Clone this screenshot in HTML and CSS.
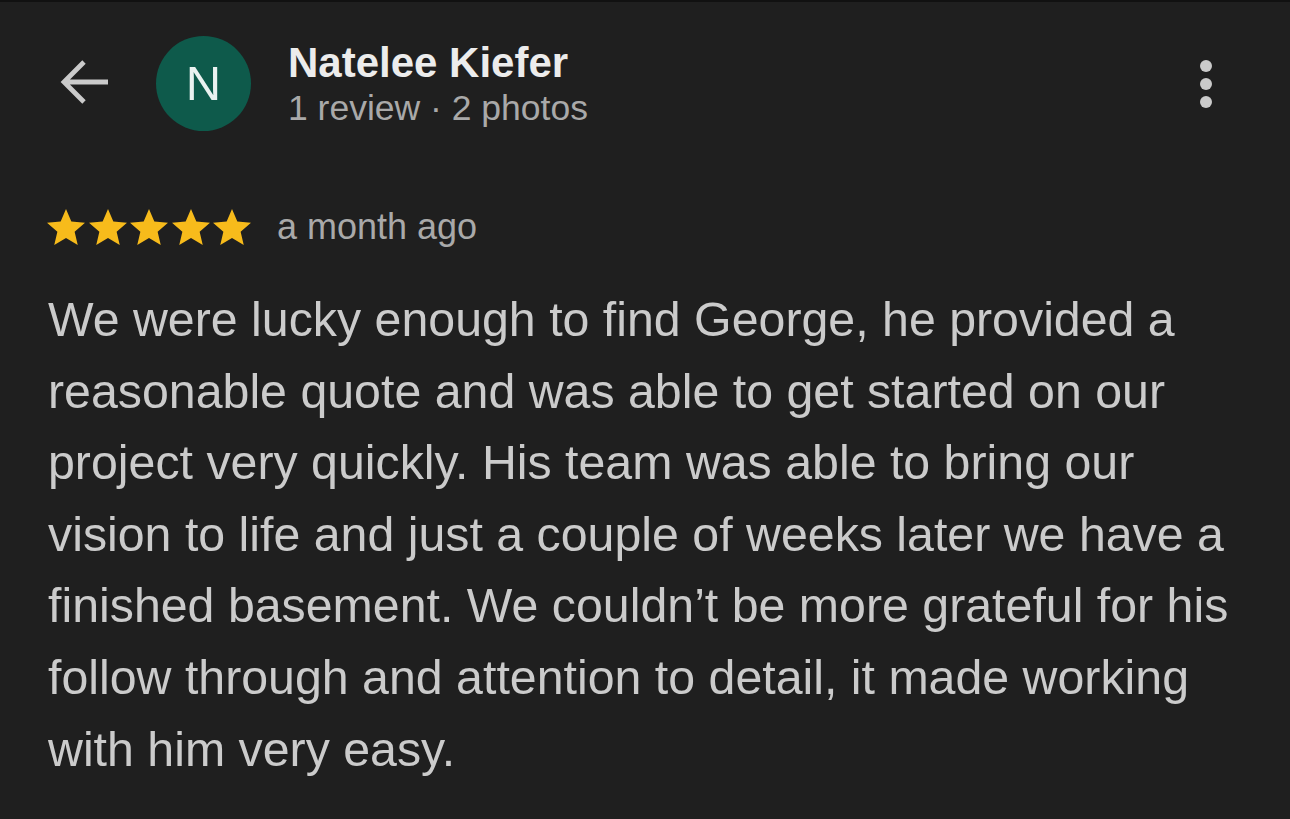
FILE: index.html
```html
<!DOCTYPE html>
<html lang="en">
<head>
<meta charset="utf-8">
<title>Review</title>
<link rel="stylesheet" href="styles.css">
</head>
<body>
<div class="screen">
  <header class="header">
    <button class="back" aria-label="Back">
      <svg width="52" height="52" viewBox="0 0 52 52"><path d="M50 24H8M26 4 6 24l20 20" fill="none" stroke="#cacaca" stroke-width="4.8"/></svg>
    </button>
    <div class="avatar">N</div>
    <div class="who">
      <div class="name">Natelee Kiefer</div>
      <div class="meta">1 review · 2 photos</div>
    </div>
    <div class="more" aria-label="More">
      <span class="dot"></span><span class="dot"></span><span class="dot"></span>
    </div>
  </header>
  <div class="rating">
    <div class="stars">
      <svg class="star" viewBox="2 1.5 20 20"><path d="M12 17.27 18.18 21l-1.64-7.03L22 9.24l-7.19-.61L12 2 9.19 8.63 2 9.240l5.46 4.73L5.82 21z"/></svg>
      <svg class="star" viewBox="2 1.5 20 20"><path d="M12 17.27 18.18 21l-1.64-7.03L22 9.24l-7.19-.61L12 2 9.19 8.63 2 9.24l5.46 4.73L5.82 21z"/></svg>
      <svg class="star" viewBox="2 1.5 20 20"><path d="M12 17.27 18.18 21l-1.64-7.03L22 9.24l-7.19-.61L12 2 9.19 8.63 2 9.24l5.46 4.73L5.82 21z"/></svg>
      <svg class="star" viewBox="2 1.5 20 20"><path d="M12 17.27 18.18 21l-1.64-7.03L22 9.24l-7.19-.61L12 2 9.19 8.63 2 9.24l5.46 4.73L5.82 21z"/></svg>
      <svg class="star" viewBox="2 1.5 20 20"><path d="M12 17.27 18.18 21l-1.64-7.03L22 9.24l-7.19-.61L12 2 9.19 8.63 2 9.24l5.46 4.73L5.82 21z"/></svg>
    </div>
    <span class="date">a month ago</span>
  </div>
  <p class="text"><span class="ln">We were lucky enough to find George, he provided a</span> <span class="ln">reasonable quote and was able to get started on our</span> <span class="ln">project very quickly. His team was able to bring our</span> <span class="ln">vision to life and just a couple of weeks later we have a</span> <span class="ln">finished basement. We couldn’t be more grateful for his</span> <span class="ln">follow through and attention to detail, it made working</span> <span class="ln">with him very easy.</span></p>
</div>
</body>
</html>
```
FILE: styles.css
```css
html, body {
  margin: 0;
  padding: 0;
  background: #1f1f1f;
}
body {
  font-family: "Liberation Sans", Arial, sans-serif;
  border-top: 2px solid #111;
  height: 817px;
  overflow: hidden;
}
.screen {
  padding: 34px 0 0 0;
}
.header {
  display: flex;
  align-items: center;
  height: 95px;
}
.back {
  background: none;
  border: 0;
  padding: 0;
  margin-left: 58px;
  width: 52px;
  height: 52px;
  display: flex;
}
.avatar {
  margin-left: 46px;
  width: 95px;
  height: 95px;
  border-radius: 50%;
  background: #0e5a4b;
  color: #eaf2f0;
  font-size: 49px;
  line-height: 95px;
  text-align: center;
  flex: none;
}
.who {
  margin-left: 37px;
  display: flex;
  flex-direction: column;
  flex: 1;
}
.name {
  font-size: 42px;
  font-weight: 700;
  color: #ececec;
  line-height: 48px;
}
.meta {
  font-size: 35.5px;
  color: #a9a9a9;
  line-height: 42px;
}
.more {
  display: flex;
  flex-direction: column;
  align-items: center;
  gap: 6px;
  margin-right: 78px;
}
.dot {
  width: 12px;
  height: 12px;
  border-radius: 50%;
  background: #cacaca;
}
.rating {
  display: flex;
  align-items: center;
  margin: 78px 0 0 47px;
  height: 36px;
}
.stars {
  display: flex;
  gap: 3.5px;
}
.star {
  width: 38px;
  height: 38px;
  fill: #f7bb1b;
}
.date {
  margin-left: 26px;
  font-size: 36px;
  line-height: 36px;
  color: #a9a9a9;
}
.text {
  margin: 39px 0 0 48px;
  font-size: 48.3px;
  line-height: 71.6px;
  color: #cbcbcb;
}
.ln {
  display: block;
  white-space: nowrap;
}
```
